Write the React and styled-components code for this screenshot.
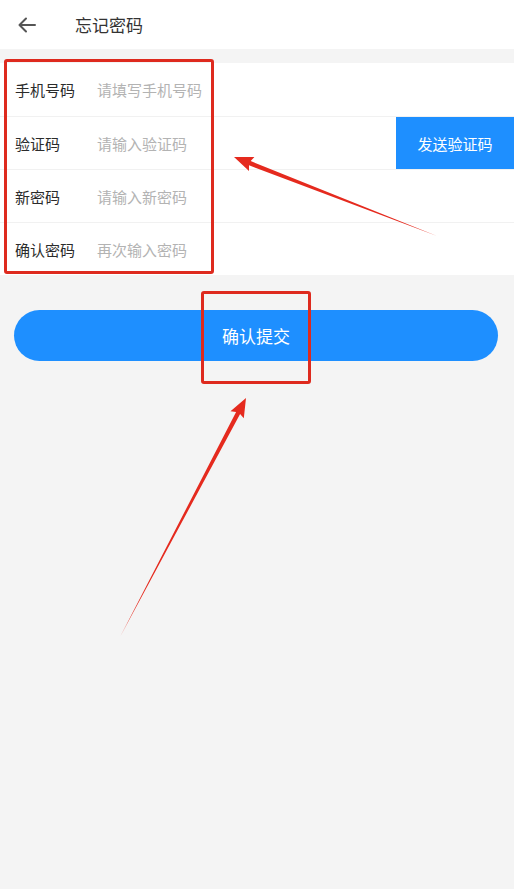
import React from "react";
import styled, { createGlobalStyle } from "styled-components";

const Global = createGlobalStyle`
  html, body { margin: 0; padding: 0; background: #f4f4f4; }
  body { font-family: "Noto Sans CJK SC", "Noto Sans", sans-serif; }
`;

const Page = styled.div`
  position: relative;
  width: 514px;
  min-height: 889px;
  background: #f4f4f4;
  overflow: hidden;
`;

const Header = styled.header`
  height: 49px;
  background: #fff;
  display: flex;
  align-items: center;
  padding-left: 16px;
  gap: 37px;
`;

const BackBtn = styled.button`
  border: 0;
  background: none;
  padding: 0;
  width: 22px;
  height: 22px;
  display: flex;
  align-items: center;
  justify-content: center;
  color: #555;
`;

const Title = styled.h1`
  margin: 0;
  font-size: 17px;
  font-weight: 400;
  color: #333;
`;

const Form = styled.section`
  margin-top: 14px;
  background: #fff;
  display: flex;
  flex-direction: column;
`;

const Row = styled.div`
  height: 53px;
  display: flex;
  align-items: center;
  border-top: ${(p) => (p.$first ? "none" : "1px solid #f1f1f1")};
  box-sizing: border-box;
`;

const Label = styled.span`
  width: 82px;
  padding-left: 15px;
  font-size: 15px;
  color: #2b2b2b;
`;

const Placeholder = styled.span`
  flex: 1;
  font-size: 15px;
  color: #b3b3b3;
`;

const SendBtn = styled.button`
  align-self: stretch;
  width: 118px;
  border: 0;
  background: #1e8fff;
  color: #fff;
  font-family: inherit;
  font-size: 15px;
  padding: 0;
`;

const SubmitWrap = styled.div`
  padding: 35px 16px 0 14px;
`;

const Submit = styled.button`
  width: 100%;
  height: 51px;
  border: 0;
  border-radius: 26px;
  background: #1e8fff;
  color: #fff;
  font-family: inherit;
  font-size: 17px;
`;

const Box = styled.div`
  position: absolute;
  border: 3px solid #de2a1e;
  border-radius: 3px;
  box-sizing: border-box;
  pointer-events: none;
`;

const Overlay = styled.svg`
  position: absolute;
  left: 0;
  top: 0;
  pointer-events: none;
`;

function arrowPoints(x1, y1, x2, y2, shaft = 4.5, headW = 15, headL = 17) {
  const dx = x2 - x1, dy = y2 - y1;
  const len = Math.hypot(dx, dy);
  const ux = dx / len, uy = dy / len;
  const nx = -uy, ny = ux;
  const bx = x2 - ux * headL, by = y2 - uy * headL;
  const p = (x, y) => `${x.toFixed(1)},${y.toFixed(1)}`;
  return [
    p(x1, y1),
    p(bx + nx * shaft / 2, by + ny * shaft / 2),
    p(bx + nx * headW / 2 - ux * 2, by + ny * headW / 2 - uy * 2),
    p(x2, y2),
    p(bx - nx * headW / 2 - ux * 2, by - ny * headW / 2 - uy * 2),
    p(bx - nx * shaft / 2, by - ny * shaft / 2),
  ].join(" ");
}

const rows = [
  { label: "手机号码", ph: "请填写手机号码" },
  { label: "验证码", ph: "请输入验证码", send: true },
  { label: "新密码", ph: "请输入新密码" },
  { label: "确认密码", ph: "再次输入密码" },
];

export default function App() {
  return (
    <Page>
      <Global />
      <Header>
        <BackBtn aria-label="back">
          <svg width="20" height="20" viewBox="0 0 20 20" fill="none" stroke="#555" strokeWidth="2" strokeLinecap="round" strokeLinejoin="round">
            <path d="M18 10H2.5M9 3.5L2.5 10L9 16.5" />
          </svg>
        </BackBtn>
        <Title>忘记密码</Title>
      </Header>
      <Form>
        {rows.map((r, i) => (
          <Row key={r.label} $first={i === 0}>
            <Label>{r.label}</Label>
            <Placeholder>{r.ph}</Placeholder>
            {r.send && <SendBtn>发送验证码</SendBtn>}
          </Row>
        ))}
      </Form>
      <SubmitWrap>
        <Submit>确认提交</Submit>
      </SubmitWrap>

      <Box style={{ left: 4, top: 59, width: 210, height: 215 }} />
      <Box style={{ left: 201, top: 291, width: 110, height: 93 }} />
      <Overlay width="514" height="889" viewBox="0 0 514 889">
        <polygon points={arrowPoints(437, 236, 234, 157)} fill="#e52a1e" />
        <polygon points={arrowPoints(120, 637, 246, 398)} fill="#e52a1e" />
      </Overlay>
    </Page>
  );
}
